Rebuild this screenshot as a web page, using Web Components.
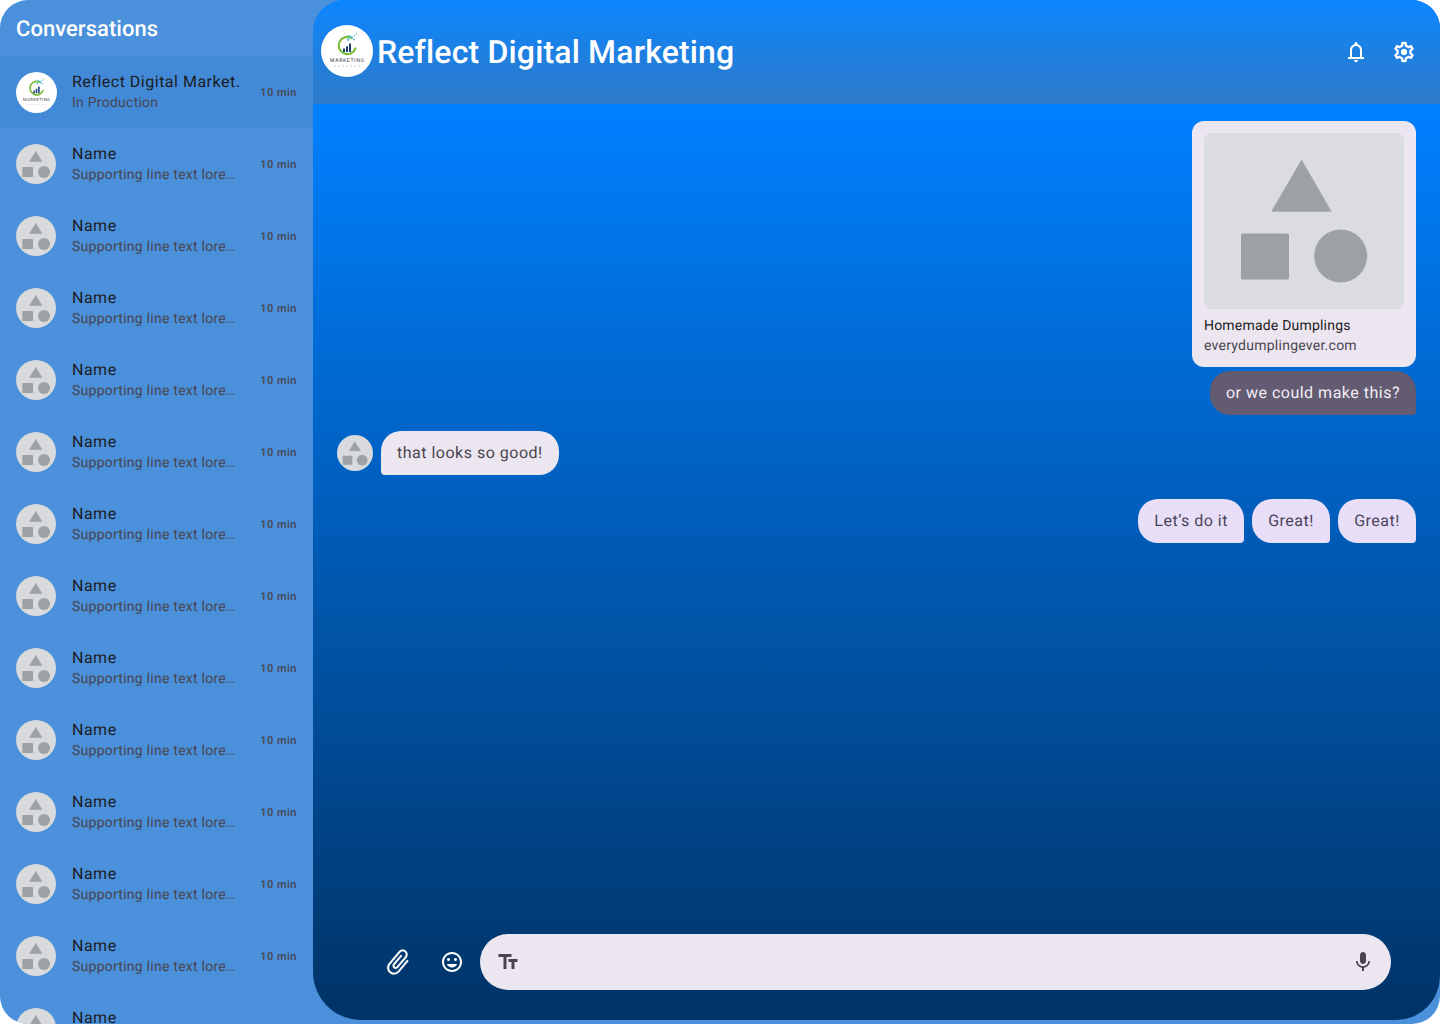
<!DOCTYPE html>
<html lang="en">
<head>
<meta charset="utf-8">
<title>Conversations</title>
<style>
html,body{margin:0;padding:0;background:#fff;width:1440px;height:1024px;overflow:hidden;font-family:Roboto,"Liberation Sans",sans-serif;text-rendering:geometricPrecision}
</style>
</head>
<body>
<chat-app></chat-app>
<script>
const ICONS={
 bell:'M4 19v-2h2v-7q0-2.075 1.25-3.687T10.5 4.2v-.7q0-.625.438-1.062T12 2q.625 0 1.062.438T13.5 3.5v.7q2 .5 3.25 2.113T18 10v7h2v2zm8 3q-.825 0-1.412-.587T10 20h4q0 .825-.587 1.413T12 22zm-4-5h8v-7q0-1.65-1.175-2.825T12 6q-1.65 0-2.825 1.175T8 10z',
 gear:'M19.43 12.98c.04-.32.07-.64.07-.98 0-.34-.03-.66-.07-.98l2.11-1.65c.19-.15.24-.42.12-.64l-2-3.46c-.09-.16-.26-.25-.44-.25-.06 0-.12.01-.17.03l-2.49 1c-.52-.4-1.08-.73-1.69-.98l-.38-2.65C14.46 2.18 14.25 2 14 2h-4c-.25 0-.46.18-.49.42l-.38 2.65c-.61.25-1.17.59-1.69.98l-2.49-1c-.06-.02-.12-.03-.18-.03-.17 0-.34.09-.43.25l-2 3.46c-.13.22-.07.49.12.64l2.11 1.65c-.04.32-.07.65-.07.98 0 .33.03.66.07.98l-2.11 1.65c-.19.15-.24.42-.12.64l2 3.46c.09.16.26.25.44.25.06 0 .12-.01.17-.03l2.49-1c.52.4 1.08.73 1.69.98l.38 2.65c.03.24.24.42.49.42h4c.25 0 .46-.18.49-.42l.38-2.65c.61-.25 1.17-.59 1.69-.98l2.49 1c.06.02.12.03.18.03.17 0 .34-.09.43-.25l2-3.46c.12-.22.07-.49-.12-.64l-2.11-1.65zm-1.98-1.71c.04.31.05.52.05.73 0 .21-.02.43-.05.73l-.14 1.13.89.7 1.08.84-.7 1.21-1.27-.51-1.04-.42-.9.68c-.43.32-.84.56-1.25.73l-1.06.43-.16 1.13-.2 1.35h-1.4l-.19-1.35-.16-1.13-1.06-.43c-.43-.18-.83-.41-1.23-.71l-.91-.7-1.06.43-1.27.51-.7-1.21 1.08-.84.89-.7-.14-1.13c-.03-.31-.05-.54-.05-.74s.02-.43.05-.73l.14-1.13-.89-.7-1.08-.84.7-1.21 1.27.51 1.04.42.9-.68c.43-.32.84-.56 1.25-.73l1.06-.43.16-1.13.2-1.35h1.39l.19 1.35.16 1.13 1.06.43c.43.18.83.41 1.23.71l.91.7 1.06-.43 1.27-.51.7 1.21-1.07.85-.89.7.14 1.13zM12 9a3 3 0 1 0 0 6 3 3 0 0 0 0-6z',
 attach:'M16.5 6v11.5c0 2.21-1.79 4-4 4s-4-1.79-4-4V5c0-1.38 1.12-2.5 2.5-2.5s2.5 1.12 2.5 2.5v10.5c0 .55-.45 1-1 1s-1-.45-1-1V6H10v9.5c0 1.38 1.12 2.5 2.5 2.5s2.5-1.12 2.5-2.5V5c0-2.21-1.79-4-4-4S7 2.79 7 5v12.5c0 3.04 2.46 5.5 5.5 5.5s5.5-2.46 5.5-5.5V6h-1.5z',
 smile:'M11.99 2C6.47 2 2 6.48 2 12s4.47 10 9.99 10C17.52 22 22 17.52 22 12S17.52 2 11.99 2zM12 20c-4.42 0-8-3.58-8-8s3.58-8 8-8 8 3.58 8 8-3.58 8-8 8zm3.5-9c.83 0 1.5-.67 1.5-1.5S16.33 8 15.5 8 14 8.67 14 9.5s.67 1.5 1.5 1.5zm-7 0c.83 0 1.5-.67 1.5-1.5S9.33 8 8.5 8 7 8.67 7 9.5 7.67 11 8.5 11zm3.5 6.5c2.33 0 4.31-1.46 5.11-3.5H6.89c.8 2.04 2.78 3.5 5.11 3.5z',
 tt:'M2.5 4v3h5v12h3V7h5V4h-13zm19 5h-9v3h3v7h3v-7h3V9z',
 mic:'M12 14c1.66 0 2.99-1.34 2.99-3L15 5c0-1.66-1.34-3-3-3S9 3.34 9 5v6c0 1.66 1.34 3 3 3zm5.3-3c0 3-2.54 5.1-5.3 5.1S6.7 14 6.7 11H5c0 3.41 2.72 6.23 6 6.72V21h2v-3.28c3.28-.48 6-3.3 6-6.72h-1.7z'
};
function def(name,html,init){
  const t=document.createElement('template');t.innerHTML=html;
  customElements.define(name,class extends HTMLElement{
    constructor(){super();this.attachShadow({mode:'open'}).appendChild(t.content.cloneNode(true));}
    connectedCallback(){if(init&&!this._i){this._i=1;init(this,this.shadowRoot);}}
  });
}
def('app-icon',`<style>:host{display:inline-flex;align-items:center;justify-content:center;width:var(--box,48px);height:var(--box,48px);flex:none;color:inherit}
svg{width:var(--size,24px);height:var(--size,24px);fill:currentColor;stroke:currentColor;stroke-width:var(--sw,0);display:block;transform:rotate(var(--rot,0deg))}</style><svg viewBox="0 0 24 24"><path></path></svg>`,
 (h,s)=>s.querySelector('path').setAttribute('d',ICONS[h.getAttribute('name')]));

def('shape-avatar',`<style>:host{display:block;width:var(--av,40px);height:var(--av,40px);flex:none}svg{display:block;width:100%;height:100%}</style>
<svg viewBox="0 0 40 40"><circle cx="20" cy="20" r="20" fill="#D8DADD"/><path d="M19.800 7.400 26 17.600H13.600z" fill="#9DA1A6" stroke="#9DA1A6" stroke-width=".6" stroke-linejoin="round"/><rect x="6.300" y="23" width="10.700" height="10" rx=".5" fill="#9DA1A6"/><circle cx="28" cy="28" r="6" fill="#9DA1A6"/></svg>`);

def('logo-avatar',`<style>:host{display:block;width:var(--av,41px);height:var(--av,41px);flex:none}svg{display:block;width:100%;height:100%}
text{font-family:Roboto,"Liberation Sans",sans-serif;font-weight:400;font-size:5.200px;letter-spacing:.6px;fill:#444;text-anchor:middle}</style>
<svg viewBox="0 0 52 52"><circle cx="26" cy="26" r="26" fill="#fff"/>
<path d="M30.600 13A8.600 8.600 0 1 0 34.400 23.500" fill="none" stroke="#7DBE3A" stroke-width="2.200" stroke-linecap="round"/>
<g stroke="#1F3E78" stroke-width="2"><path d="M23 27v-3.600"/><path d="M26 27v-5.800"/><path d="M29 27v-8.500"/></g>
<g fill="#5BC4E0"><rect x="26" y="13.500" width="2.200" height="2.200"/><rect x="29.500" y="11" width="2.200" height="2.200"/><rect x="27" y="10" width="1.800" height="1.800"/><rect x="32" y="13.500" width="1.800" height="1.800"/><rect x="32.800" y="9.800" width="1.400" height="1.400"/></g><rect x="35" y="8" width="1.200" height="1.200" fill="#7DBE3A"/>
<text x="26.300" y="37.400">MARKETING</text>
<g fill="#777"><circle cx="14" cy="41" r=".5"/><circle cx="18" cy="41" r=".5"/><circle cx="22" cy="41" r=".5"/><circle cx="26" cy="41" r=".5"/><circle cx="30" cy="41" r=".5"/><circle cx="34" cy="41" r=".5"/><circle cx="38" cy="41" r=".5"/></g></svg>`);

def('conv-item',`<style>
:host{display:flex;align-items:center;height:72px;padding:0 16px;box-sizing:border-box;flex:none;gap:16px}
:host([selected]){background:#428AD8}
::slotted(logo-avatar){margin-right:-1px}
.t{flex:1;min-width:0;margin-right:8px;margin-top:-3px}
.n{font-size:16px;line-height:24px;letter-spacing:.5px;color:#1D1B20;white-space:nowrap}
.s{font-size:14px;line-height:18px;letter-spacing:.25px;color:#49454F;white-space:nowrap}
.m{font-size:11px;line-height:16px;font-weight:500;letter-spacing:.5px;color:#49454F;white-space:nowrap;margin-top:2px}
</style><slot name="avatar"></slot><div class="t"><div class="n"></div><div class="s"></div></div><div class="m">10 min</div>`,
(h,s)=>{s.querySelector('.n').textContent=h.getAttribute('name');s.querySelector('.s').textContent=h.getAttribute('line');});

def('conv-sidebar',`<style>
:host{display:flex;flex-direction:column;width:313px;flex:none;overflow:hidden;height:1024px;color:#fff}
h2{margin:0;height:56px;box-sizing:border-box;padding:17px 16px 0;font-size:22px;line-height:26px;font-weight:500;letter-spacing:.04px;color:#fff;flex:none}
</style><h2>Conversations</h2><slot></slot>`);

def('chat-header',`<style>
:host{display:flex;align-items:center;height:104px;flex:none;padding:0 12px 0 8px;box-sizing:border-box;color:#fff;background:linear-gradient(180deg,#0B86FF 0%,#2F7AC6 100%);--av:52px}
logo-avatar{margin-top:-2px}
h1{margin:0 0 0 4px;font-size:32px;line-height:40px;font-weight:500;letter-spacing:.16px;flex:1;color:#fff}
</style><logo-avatar></logo-avatar><h1>Reflect Digital Marketing</h1><app-icon name="bell"></app-icon><app-icon name="gear" style="--sw:.35"></app-icon>`);

def('msg-bubble',`<style>
:host{display:block;flex:none;font-size:16px;line-height:24px;letter-spacing:.5px;padding:10px 16px;height:44px;box-sizing:border-box;white-space:nowrap;background:#E8DEF8;color:#4A4458;border-radius:20px 20px 4px 20px;text-align:center}
:host([kind=in]){background:#ECE6F0;color:#49454F;border-radius:20px 20px 20px 4px}
:host([kind=dark]){background:#625B71;color:#F3EEF6}
:host([wide]){min-width:78px;box-sizing:border-box}
</style><slot></slot>`);

def('link-card',`<style>
:host{display:block;width:224px;height:246px;box-sizing:border-box;padding:12px;background:#ECE6F0;border-radius:12px;flex:none}
.img{display:block;width:200px;height:176px}
.a{font-size:14px;line-height:20px;letter-spacing:.2px;color:#1D1B20;margin-top:7px}
.b{font-size:14px;line-height:20px;letter-spacing:.25px;color:#49454F}
</style><svg class="img" viewBox="0 0 200 176"><rect width="200" height="176" rx="8" fill="#DBDCDF"/><path d="M97.700 28 126.500 78H68.500z" fill="#9DA1A6" stroke="#9DA1A6" stroke-width="1.500" stroke-linejoin="round"/><rect x="37" y="100.500" width="48" height="46" rx="1.500" fill="#9DA1A6"/><circle cx="136.700" cy="123" r="26.500" fill="#9DA1A6"/></svg>
<div class="a">Homemade Dumplings</div><div class="b">everydumplingever.com</div>`);

def('msg-row',`<style>
:host{display:flex;gap:8px;align-items:center;justify-content:flex-end;flex:none}
:host([in]){justify-content:flex-start;--av:36px}
</style><slot></slot>`);

def('chat-messages',`<style>
:host{display:flex;flex-direction:column;flex:1;padding:17px 24px 0;box-sizing:border-box;min-height:0}
.out{display:flex;flex-direction:column;align-items:flex-end;gap:4px}
msg-row{margin-top:16px}
msg-row.o{margin-top:24px}
</style>
<div class="out"><link-card></link-card><msg-bubble kind="dark">or we could make this?</msg-bubble></div>
<msg-row in><shape-avatar></shape-avatar><msg-bubble kind="in">that looks so good!</msg-bubble></msg-row>
<msg-row class="o"><msg-bubble>Let’s do it</msg-bubble><msg-bubble wide>Great!</msg-bubble><msg-bubble wide>Great!</msg-bubble></msg-row>`);

def('chat-input',`<style>
:host{display:flex;align-items:center;flex:none;padding:0 49px 30px 65px;color:#fff}
.a{--box:40px;--size:30px;--rot:40deg;--sw:.15;margin-right:14px}
.s{--box:40px;--size:24px;margin-right:8px}
.f{flex:1;height:56px;background:#ECE6F0;border-radius:28px;display:flex;align-items:center;justify-content:space-between;padding:0 16px;box-sizing:border-box;color:#49454F}
.f app-icon{--box:24px;--size:24px}
</style><app-icon class="a" name="attach"></app-icon><app-icon class="s" name="smile"></app-icon>
<div class="f"><app-icon name="tt"></app-icon><app-icon name="mic"></app-icon></div>`);

def('chat-main',`<style>
:host{display:flex;flex-direction:column;flex:1;min-width:0;height:1020px;overflow:hidden;border-radius:32px 28px 44px 48px;background:linear-gradient(180deg,#0080FF 104px,#003366 100%)}
</style><chat-header></chat-header><chat-messages></chat-messages><chat-input></chat-input>`);

def('chat-app',`<style>
:host{display:flex;align-items:flex-start;width:1440px;height:1024px;overflow:hidden;border-radius:28px;background:#4A90DB;font-family:Roboto,"Liberation Sans",sans-serif}
</style><conv-sidebar></conv-sidebar><chat-main></chat-main>`,
(h,s)=>{
  const side=s.querySelector('conv-sidebar');
  const first=document.createElement('conv-item');
  first.setAttribute('selected','');first.setAttribute('name','Reflect Digital Market.');first.setAttribute('line','In Production');
  first.innerHTML='<logo-avatar slot="avatar"></logo-avatar>';side.appendChild(first);
  for(let i=0;i<13;i++){
    const it=document.createElement('conv-item');
    it.setAttribute('name','Name');it.setAttribute('line','Supporting line text lore…');
    it.innerHTML='<shape-avatar slot="avatar"></shape-avatar>';side.appendChild(it);
  }
});
</script>
</body>
</html>
